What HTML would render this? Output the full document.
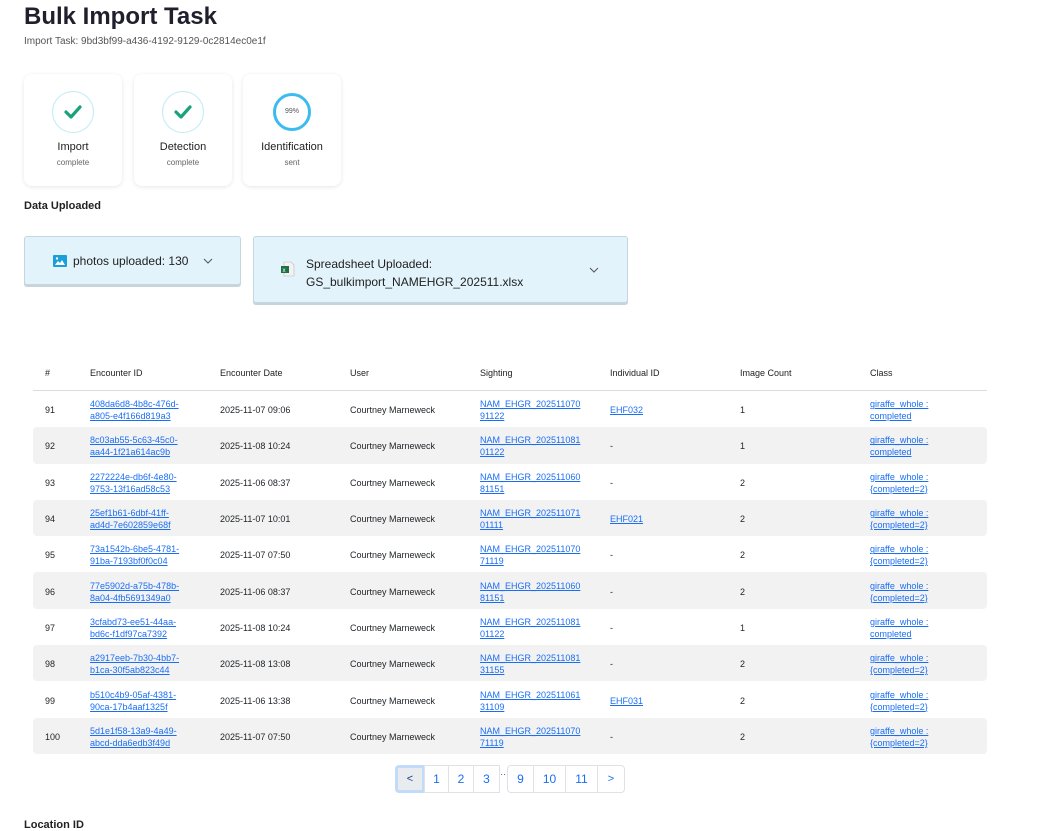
<!DOCTYPE html>
<html><head><meta charset="utf-8"><style>
*{box-sizing:border-box;margin:0;padding:0}
body{width:1064px;height:822px;overflow:hidden;background:#fff;font-family:"Liberation Sans",sans-serif;color:#212529;position:relative}
.a{position:absolute}
h1{position:absolute;left:24px;top:3px;font-size:24px;font-weight:bold;color:#1f1f2e}
.sub{left:24px;top:36px;font-size:10px;color:#555}
.card{position:absolute;top:74px;width:98px;height:112px;border-radius:8px;box-shadow:0 1px 4px rgba(0,0,0,.1);background:#fff;text-align:center}
.circ{position:absolute;left:28px;top:17px;width:42px;height:42px;border-radius:50%;border:1px solid #bfeaf7}
.card .t{position:absolute;left:0;right:0;top:67px;font-size:11px;color:#222}
.card .s{position:absolute;left:0;right:0;top:84px;font-size:8px;color:#666}
.box{position:absolute;background:#e2f3fb;border:1px solid #c6d6e0;border-radius:3px;box-shadow:0 2px 0 #c9d3da}
table{position:absolute;left:33px;top:356px;width:954px;border-collapse:separate;border-spacing:0;font-size:9px}
th{text-align:left;font-weight:normal;height:35px;border-bottom:1px solid #ddd;color:#222}
td{height:36.3px;vertical-align:middle;line-height:12px;padding-top:2px}
tr.g td{background:#f2f2f2}
tr.g td:first-child{border-radius:4px 0 0 4px}
tr.g td:last-child{border-radius:0 4px 4px 0}
td:first-child,th:first-child{padding-left:12px}
a{color:#1a6ef5;text-decoration:underline}
.pg{position:absolute;top:765px;height:28px;border:1px solid #dee2e6;font-size:12px;color:#1a6ef5;display:flex;align-items:center;justify-content:center}
</style></head><body>
<h1>Bulk Import Task</h1>
<div class="a sub">Import Task: 9bd3bf99-a436-4192-9129-0c2814ec0e1f</div>

<div class="card" style="left:24px"><div class="circ"><svg width="42" height="42" viewBox="0 0 42 42" style="position:absolute;left:-1px;top:-1px"><path d="M14 21l5 5 9-10" stroke="#1aa37a" stroke-width="3.2" fill="none" stroke-linecap="round" stroke-linejoin="round"/></svg></div><div class="t">Import</div><div class="s">complete</div></div>
<div class="card" style="left:134px"><div class="circ"><svg width="42" height="42" viewBox="0 0 42 42" style="position:absolute;left:-1px;top:-1px"><path d="M14 21l5 5 9-10" stroke="#1aa37a" stroke-width="3.2" fill="none" stroke-linecap="round" stroke-linejoin="round"/></svg></div><div class="t">Detection</div><div class="s">complete</div></div>
<div class="card" style="left:243px"><div class="circ" style="border:3px solid #3bbcef;width:38px;height:38px;left:30px;top:19px;font-size:7px;color:#555;line-height:32px">99%</div><div class="t">Identification</div><div class="s">sent</div></div>

<div class="a" style="left:24px;top:200px;font-size:11px;font-weight:bold;color:#222">Data Uploaded</div>

<div class="box" style="left:24px;top:236px;width:217px;height:49px">
<svg class="a" style="left:28px;top:18px" width="14" height="12" viewBox="0 0 14 12"><rect width="14" height="12" rx="1" fill="#1aa0d8"/><path d="M2 10l3-4 2 2 2-3 3 5z" fill="#fff"/><circle cx="4" cy="3.5" r="1.2" fill="#fff"/></svg>
<div class="a" style="left:48px;top:17px;font-size:12px;color:#222">photos uploaded: 130</div>
<svg class="a" style="left:178px;top:21px" width="10" height="6"><path d="M1 1l4 4 4-4" stroke="#555" fill="none"/></svg>
</div>
<div class="box" style="left:253px;top:236px;width:375px;height:67px">
<svg class="a" style="left:27px;top:24px" width="14" height="16" viewBox="0 0 14 16"><path d="M3 1h7l3 3v11H3z" fill="#f2f2f2" stroke="#bbb" stroke-width=".6"/><rect x="0" y="5" width="8" height="7" fill="#1e7145"/><text x="1.5" y="11" font-size="6" fill="#fff" font-family="Liberation Sans">x</text></svg>
<div class="a" style="left:52px;top:18px;font-size:12px;color:#222;line-height:18px">Spreadsheet Uploaded:<br>GS_bulkimport_NAMEHGR_202511.xlsx</div>
<svg class="a" style="left:335px;top:30px" width="10" height="6"><path d="M1 1l4 4 4-4" stroke="#555" fill="none"/></svg>
</div>

<table>
<colgroup><col style="width:57px"><col style="width:130px"><col style="width:130px"><col style="width:130px"><col style="width:130px"><col style="width:130px"><col style="width:130px"><col></colgroup>
<tr><th>#</th><th>Encounter ID</th><th>Encounter Date</th><th>User</th><th>Sighting</th><th>Individual ID</th><th>Image Count</th><th>Class</th></tr>
<tr><td>91</td><td><a>408da6d8-4b8c-476d-<br>a805-e4f166d819a3</a></td><td>2025-11-07 09:06</td><td>Courtney Marneweck</td><td><a>NAM_EHGR_202511070<br>91122</a></td><td><a>EHF032</a></td><td>1</td><td><a>giraffe_whole :<br>completed</a></td></tr>
<tr class="g"><td>92</td><td><a>8c03ab55-5c63-45c0-<br>aa44-1f21a614ac9b</a></td><td>2025-11-08 10:24</td><td>Courtney Marneweck</td><td><a>NAM_EHGR_202511081<br>01122</a></td><td>-</td><td>1</td><td><a>giraffe_whole :<br>completed</a></td></tr>
<tr><td>93</td><td><a>2272224e-db6f-4e80-<br>9753-13f16ad58c53</a></td><td>2025-11-06 08:37</td><td>Courtney Marneweck</td><td><a>NAM_EHGR_202511060<br>81151</a></td><td>-</td><td>2</td><td><a>giraffe_whole :<br>{completed=2}</a></td></tr>
<tr class="g"><td>94</td><td><a>25ef1b61-6dbf-41ff-<br>ad4d-7e602859e68f</a></td><td>2025-11-07 10:01</td><td>Courtney Marneweck</td><td><a>NAM_EHGR_202511071<br>01111</a></td><td><a>EHF021</a></td><td>2</td><td><a>giraffe_whole :<br>{completed=2}</a></td></tr>
<tr><td>95</td><td><a>73a1542b-6be5-4781-<br>91ba-7193bf0f0c04</a></td><td>2025-11-07 07:50</td><td>Courtney Marneweck</td><td><a>NAM_EHGR_202511070<br>71119</a></td><td>-</td><td>2</td><td><a>giraffe_whole :<br>{completed=2}</a></td></tr>
<tr class="g"><td>96</td><td><a>77e5902d-a75b-478b-<br>8a04-4fb5691349a0</a></td><td>2025-11-06 08:37</td><td>Courtney Marneweck</td><td><a>NAM_EHGR_202511060<br>81151</a></td><td>-</td><td>2</td><td><a>giraffe_whole :<br>{completed=2}</a></td></tr>
<tr><td>97</td><td><a>3cfabd73-ee51-44aa-<br>bd6c-f1df97ca7392</a></td><td>2025-11-08 10:24</td><td>Courtney Marneweck</td><td><a>NAM_EHGR_202511081<br>01122</a></td><td>-</td><td>1</td><td><a>giraffe_whole :<br>completed</a></td></tr>
<tr class="g"><td>98</td><td><a>a2917eeb-7b30-4bb7-<br>b1ca-30f5ab823c44</a></td><td>2025-11-08 13:08</td><td>Courtney Marneweck</td><td><a>NAM_EHGR_202511081<br>31155</a></td><td>-</td><td>2</td><td><a>giraffe_whole :<br>{completed=2}</a></td></tr>
<tr><td>99</td><td><a>b510c4b9-05af-4381-<br>90ca-17b4aaf1325f</a></td><td>2025-11-06 13:38</td><td>Courtney Marneweck</td><td><a>NAM_EHGR_202511061<br>31109</a></td><td><a>EHF031</a></td><td>2</td><td><a>giraffe_whole :<br>{completed=2}</a></td></tr>
<tr class="g"><td>100</td><td><a>5d1e1f58-13a9-4a49-<br>abcd-dda6edb3f49d</a></td><td>2025-11-07 07:50</td><td>Courtney Marneweck</td><td><a>NAM_EHGR_202511070<br>71119</a></td><td>-</td><td>2</td><td><a>giraffe_whole :<br>{completed=2}</a></td></tr>
</table>

<div class="pg" style="left:395px;width:30px;background:#e9ecef;border:3px solid #c2dbfb;border-radius:4px 0 0 4px;font-size:11px;color:#1a3e8a">&lt;</div>
<div class="pg" style="left:424px;width:25px">1</div>
<div class="pg" style="left:448px;width:26px">2</div>
<div class="pg" style="left:473px;width:27px">3</div>
<div class="a" style="left:500px;top:767px;font-size:9px;color:#555">…</div>
<div class="pg" style="left:507px;width:27px;border-radius:4px 0 0 4px">9</div>
<div class="pg" style="left:533px;width:33px">10</div>
<div class="pg" style="left:565px;width:33px">11</div>
<div class="pg" style="left:597px;width:28px;border-radius:0 4px 4px 0;font-size:11px">&gt;</div>

<div class="a" style="left:24px;top:819px;font-size:11px;font-weight:bold;color:#222">Location ID</div>
</body></html>
